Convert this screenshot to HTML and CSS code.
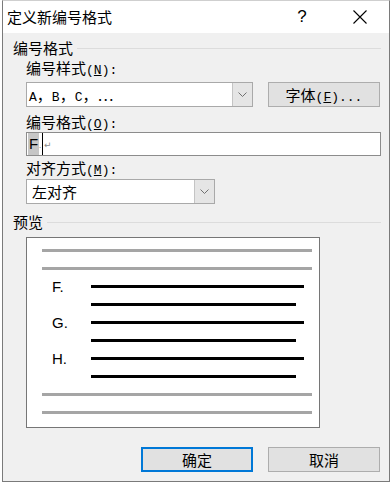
FILE: index.html
```html
<html>

<head>
    <meta charset="utf-8">
    <link rel="stylesheet" href="styles.css">
</head>

<body>
    <div class="dialog">
        <div class="titlebar">
            <div class="title">定义新编号格式</div>
            <div class="cap-btn help">?</div>
            <div class="cap-btn">
                <svg width="14" height="14" viewBox="0 0 14 14">
                    <path d="M0.5 0.5 L13.5 13.5 M13.5 0.5 L0.5 13.5" stroke="#000" stroke-width="1.1" fill="none" />
                </svg>
            </div>
        </div>

        <div class="content">
            <div class="group-head">
                <span>编号格式</span>
                <div class="rule"></div>
            </div>

            <div class="indent">
                <div class="label first">编号样式<span class="en">(<u>N</u>):</span></div>
                <div class="row">
                    <div class="combo style-combo">
                        <div class="value"><span class="en">A</span>，<span class="en">B</span>，<span class="en">C</span>，⋯</div>
                        <div class="arrow">
                            <svg width="9" height="5" viewBox="0 0 9 5">
                                <path d="M0.5 0.5 L4.5 4.5 L8.5 0.5" stroke="#707070" stroke-width="1" fill="none" />
                            </svg>
                        </div>
                    </div>
                    <button class="btn font-btn">字体<span class="en">(<u>F</u>)...</span></button>
                </div>

                <div class="label">编号格式<span class="en">(<u>O</u>):</span></div>
                <div class="input">
                    <span class="sel">F</span><span class="dot">.</span><span class="caret"></span><span class="para">↵</span>
                </div>

                <div class="label third">对齐方式<span class="en">(<u>M</u>):</span></div>
                <div class="combo align-combo">
                    <div class="value">左对齐</div>
                    <div class="arrow">
                        <svg width="9" height="5" viewBox="0 0 9 5">
                            <path d="M0.5 0.5 L4.5 4.5 L8.5 0.5" stroke="#707070" stroke-width="1" fill="none" />
                        </svg>
                    </div>
                </div>
            </div>

            <div class="group-head preview-head">
                <span>预览</span>
                <div class="rule"></div>
            </div>

            <div class="indent">
                <div class="preview">
                    <div class="gline"></div>
                    <div class="gline"></div>
                    <div class="item"><span class="num">F.</span><div class="bline"></div></div>
                    <div class="bline short"></div>
                    <div class="item"><span class="num">G.</span><div class="bline"></div></div>
                    <div class="bline short"></div>
                    <div class="item"><span class="num">H.</span><div class="bline"></div></div>
                    <div class="bline short"></div>
                    <div class="gline"></div>
                    <div class="gline"></div>
                </div>
            </div>

            <div class="buttons">
                <button class="btn default">确定</button>
                <button class="btn">取消</button>
            </div>
        </div>
    </div>
</body>

</html>
```

FILE: styles.css
```css
* {
    margin: 0;
    padding: 0;
    box-sizing: border-box;
}

body {
    background-color: #fff;
    font-family: "Noto Sans CJK SC", sans-serif;
    font-size: 15px;
    color: #000;
}

.dialog {
    margin-left: 2px;
    width: 388px;
    height: 482px;
    border: 1px solid #7a7a7a;
    border-top-color: #cfcfcf;
    background-color: #f0f0f0;
    display: flex;
    flex-direction: column;
}

.titlebar {
    height: 32px;
    background-color: #fff;
    display: flex;
    align-items: center;
}

.title {
    flex: 1;
    padding-left: 4px;
    line-height: 32px;
}

.cap-btn {
    width: 58px;
    height: 32px;
    display: flex;
    align-items: center;
    justify-content: center;
}

.help {
    font-family: "Liberation Sans", sans-serif;
    font-size: 17px;
}

.content {
    flex: 1;
    padding: 0 8px 0 10px;
    display: flex;
    flex-direction: column;
}

.group-head {
    display: flex;
    align-items: center;
    height: 16px;
    line-height: 16px;
    margin-top: 7px;
}

.group-head .rule {
    flex: 1;
    height: 1px;
    margin-left: 4px;
    background-color: #dcdcdc;
}

.preview-head {
    margin-top: 10px;
}

.indent {
    padding-left: 13px;
    display: flex;
    flex-direction: column;
}

.en {
    font-family: "Liberation Mono", monospace;
    font-size: 13px;
}

.label {
    height: 16px;
    line-height: 16px;
    margin-top: 7px;
}

.label.first {
    margin-top: 4px;
}

.label.third {
    margin-top: 4px;
}

.row {
    display: flex;
    margin-top: 6px;
}

.combo {
    display: flex;
    height: 25px;
    border: 1px solid #a9a9a9;
    background-color: #fff;
}

.combo .value {
    flex: 1;
    line-height: 23px;
    padding-left: 2px;
}

.combo .arrow {
    width: 20px;
    background-color: #e5e5e5;
    border-left: 1px solid #c4c4c4;
    display: flex;
    align-items: center;
    justify-content: center;
}

.style-combo {
    width: 227px;
}

.align-combo {
    width: 189px;
    margin-top: 3px;
}

.align-combo .value {
    padding-left: 5px;
}

.btn {
    width: 112px;
    height: 25px;
    font: inherit;
    color: #000;
    background-color: #e1e1e1;
    border: 1px solid #adadad;
}

.btn.default {
    border: 2px solid #0078d7;
}

.font-btn {
    margin-left: 15px;
}

.input {
    height: 24px;
    margin-top: 2px;
    border: 1px solid #8c8c8c;
    background-color: #fff;
    display: flex;
    align-items: stretch;
    padding-left: 1px;
}

.input .sel {
    background-color: #c6c6c6;
    font-family: "Liberation Sans", sans-serif;
    font-size: 15px;
    line-height: 22px;
    padding-left: 1px;
    width: 11px;
    overflow: hidden;
}

.input .dot {
    font-family: "Liberation Sans", sans-serif;
    font-size: 8px;
    line-height: 26px;
    color: #555;
    width: 2px;
    overflow: hidden;
}

.input .caret {
    width: 1px;
    background-color: #000;
    margin-left: 1px;
}

.input .para {
    font-family: "DejaVu Sans", sans-serif;
    font-size: 9px;
    color: #8a8a8a;
    line-height: 24px;
    margin-left: 1px;
}

.preview {
    width: 294px;
    margin-top: 7px;
    border: 1px solid #767676;
    background-color: #fff;
    padding: 11px 7px 13px 15px;
    display: flex;
    flex-direction: column;
    gap: 15px;
}

.gline {
    height: 3px;
    background-color: #a5a5a5;
}

.item {
    display: flex;
    align-items: center;
    height: 3px;
}

.item .num {
    width: 49px;
    padding-left: 10px;
    line-height: 3px;
    font-family: "Liberation Sans", sans-serif;
    font-size: 15px;
}

.bline {
    width: 213px;
    height: 3px;
    background-color: #000;
}

.bline.short {
    width: 205px;
    margin-left: 49px;
}

.buttons {
    display: flex;
    justify-content: flex-end;
    gap: 15px;
    margin-top: 19px;
    padding-right: 1px;
}
```
